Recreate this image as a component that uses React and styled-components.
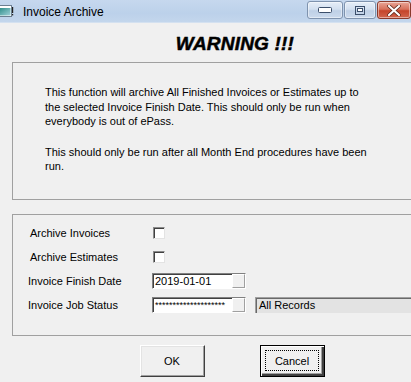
import React from "react";
import styled, { createGlobalStyle, css } from "styled-components";

const GlobalStyle = createGlobalStyle`
  html, body {
    margin: 0;
    padding: 0;
    background: #f0f0f0;
    overflow: hidden;
  }
  body {
    font-family: "Liberation Sans", Arial, sans-serif;
    font-size: 11px;
    color: #000;
  }
`;

const Window = styled.div`
  width: 411px;
  height: 382px;
  overflow: hidden;
  background: #f0f0f0;
`;

const TitleBar = styled.div`
  height: 22px;
  display: flex;
  align-items: center;
  background: linear-gradient(#c6d8ee, #bcd1ea 60%, #c3d6ec);
  border-bottom: 1px solid #d4e1f0;
`;

const AppIcon = styled.svg`
  flex: none;
  margin-left: -2px;
  margin-right: 9px;
`;

const Caption = styled.span`
  flex: 1;
  font-size: 12px;
  color: #000;
  padding-top: 1px;
`;

const CaptionButtons = styled.div`
  display: flex;
  align-self: flex-start;
  gap: 1px;
  padding-top: 1px;
`;

const CaptionButton = styled.div`
  height: 18px;
  width: ${(p) => p.$w}px;
  border-radius: 3px;
  border: 1px solid ${(p) => (p.$close ? "#8a3a2c" : "#7f93ae")};
  box-sizing: border-box;
  display: flex;
  align-items: center;
  justify-content: center;
  background: ${(p) =>
    p.$close
      ? "linear-gradient(#e9a697, #d7715c 45%, #c5452b 55%, #d1654d)"
      : "linear-gradient(#e6eef8, #d3e0f0 45%, #bfd0e6 55%, #cbdaed)"};
  box-shadow: inset 0 0 0 1px rgba(255, 255, 255, 0.45);
`;

const Content = styled.div`
  width: 470px;
  padding-left: 12px;
  box-sizing: border-box;
`;

const Warning = styled.div`
  height: 39px;
  display: flex;
  align-items: center;
  justify-content: center;
  font-family: "Liberation Sans", Arial, sans-serif;
  font-weight: bold;
  font-style: italic;
  font-size: 19px;
  letter-spacing: 0.2px;
  -webkit-text-stroke: 0.5px #000;
  padding: 2px 12px 0 0;
  box-sizing: border-box;
`;

const Panel = styled.div`
  width: 470px;
  border: 1px solid #a0a0a0;
  box-sizing: border-box;
  ${(p) => css`
    height: ${p.$h}px;
    margin-top: ${p.$top}px;
  `}
`;

const InfoText = styled.div`
  padding: 22px 0 0 32px;
  line-height: 14.5px;

  p {
    margin: 0 0 16px;
  }
`;

const Form = styled.div`
  padding-top: 5px;
  display: flex;
  flex-direction: column;
`;

const Row = styled.div`
  height: ${(p) => p.$h}px;
  display: flex;
  align-items: center;
`;

const Label = styled.span`
  width: ${(p) => 139 - p.$indent}px;
  padding-left: ${(p) => p.$indent}px;
`;

const Checkbox = styled.span`
  width: 12px;
  height: 12px;
  box-sizing: border-box;
  background: #fff;
  border-top: 1px solid #8a8a8a;
  border-left: 1px solid #8a8a8a;
  border-right: 1px solid #e3e3e3;
  border-bottom: 1px solid #e3e3e3;
  box-shadow: inset 1px 1px 0 #404040;
  margin-left: 1px;
`;

const Field = styled.div`
  display: flex;
  width: 94px;
  height: 16px;
  box-sizing: border-box;
  border-top: 1px solid #808080;
  border-left: 1px solid #808080;
  border-right: 1px solid #fff;
  border-bottom: 1px solid #fff;
  box-shadow: inset 1px 1px 0 #404040;
  background: #fff;
`;

const FieldText = styled.span`
  flex: 1;
  padding-left: 2px;
  line-height: 14px;
  font-size: ${(p) => (p.$small ? "9px" : "11px")};
  overflow: hidden;
  white-space: nowrap;
`;

const FieldButton = styled.span`
  width: 13px;
  height: 14px;
  box-sizing: border-box;
  background: #f0f0f0;
  border-top: 1px solid #fff;
  border-left: 1px solid #fff;
  border-right: 1px solid #a0a0a0;
  border-bottom: 1px solid #a0a0a0;
`;

const ReadOnly = styled.div`
  margin-left: 9px;
  flex: 1;
  height: 16px;
  box-sizing: border-box;
  background: #e3e3e3;
  border-top: 1px solid #a0a0a0;
  border-left: 1px solid #a0a0a0;
  box-shadow: inset 1px 1px 0 #696969;
  padding-left: 3px;
  line-height: 15px;
`;

const ButtonBar = styled.div`
  display: flex;
  justify-content: center;
  gap: 55px;
  padding: 9px 18px 0 0;
`;

const Button = styled.button`
  width: 65px;
  height: 32px;
  font-family: "Liberation Sans", Arial, sans-serif;
  font-size: 11px;
  color: #000;
  background: #f0f0f0;
  padding: 0;
  box-sizing: border-box;
  border: 1px solid;
  border-color: #fff #404040 #404040 #fff;
  box-shadow: inset -1px -1px 0 #a0a0a0, inset 1px 1px 0 #e3e3e3;
  position: relative;

  ${(p) =>
    p.$default &&
    css`
      border: 1px solid #000;
      box-shadow: inset 1px 1px 0 #fff, inset -2px -2px 0 #404040,
        inset -3px -3px 0 #a0a0a0;

      &::after {
        content: "";
        position: absolute;
        inset: 4px 5px 5px 4px;
        border: 1px dotted #000;
      }
    `}
`;

const IconMinimize = () => (
  <svg width="14" height="6" viewBox="0 0 14 6">
    <rect x="0.5" y="0.5" width="13" height="5" rx="1" fill="#fff" stroke="#3c4f6b" />
  </svg>
);

const IconMaximize = () => (
  <svg width="10" height="9" viewBox="0 0 10 9">
    <rect x="0.5" y="0.5" width="9" height="8" fill="none" stroke="#3c4f6b" />
    <rect x="2.5" y="2.5" width="5" height="3" fill="#fff" stroke="#3c4f6b" />
  </svg>
);

const IconClose = () => (
  <svg width="14" height="11" viewBox="0 0 14 11">
    <path
      d="M2 1 L12 10 M12 1 L2 10"
      stroke="#5a2418"
      strokeWidth="3.6"
      strokeLinecap="round"
    />
    <path d="M2 1 L12 10 M12 1 L2 10" stroke="#fff" strokeWidth="2.2" strokeLinecap="round" />
  </svg>
);

export default function App() {
  return (
    <>
      <GlobalStyle />
      <Window>
        <TitleBar>
          <AppIcon width="16" height="12" viewBox="0 0 16 12">
            <defs>
              <linearGradient id="ico" x1="0" y1="0" x2="1" y2="1">
                <stop offset="0" stopColor="#2f8f8a" />
                <stop offset="1" stopColor="#9fd0d8" />
              </linearGradient>
            </defs>
            <rect x="0.5" y="0.5" width="13" height="11" fill="#fff" stroke="#6d7f90" />
            <rect x="1.5" y="3" width="11" height="7.5" fill="url(#ico)" />
            <rect x="14" y="2" width="1.2" height="6" fill="#222" />
            <rect x="14" y="9" width="1.2" height="1.4" fill="#222" />
          </AppIcon>
          <Caption>Invoice Archive</Caption>
          <CaptionButtons>
            <CaptionButton $w={36}>
              <IconMinimize />
            </CaptionButton>
            <CaptionButton $w={32}>
              <IconMaximize />
            </CaptionButton>
            <CaptionButton $w={34} $close>
              <IconClose />
            </CaptionButton>
          </CaptionButtons>
        </TitleBar>
        <Content>
          <Warning>WARNING !!!</Warning>
          <Panel $h={138} $top={0}>
            <InfoText>
              <p>
                This function will archive All Finished Invoices or Estimates up to
                <br />
                the selected Invoice Finish Date. This should only be run when
                <br />
                everybody is out of ePass.
              </p>
              <p>
                This should only be run after all Month End procedures have been
                <br />
                run.
              </p>
            </InfoText>
          </Panel>
          <Panel $h={122} $top={14}>
            <Form>
              <Row $h={25}>
                <Label $indent={17}>Archive Invoices</Label>
                <Checkbox />
              </Row>
              <Row $h={24}>
                <Label $indent={17}>Archive Estimates</Label>
                <Checkbox />
              </Row>
              <Row $h={23}>
                <Label $indent={15}>Invoice Finish Date</Label>
                <Field>
                  <FieldText>2019-01-01</FieldText>
                  <FieldButton />
                </Field>
              </Row>
              <Row $h={25}>
                <Label $indent={15}>Invoice Job Status</Label>
                <Field>
                  <FieldText $small>********************</FieldText>
                  <FieldButton />
                </Field>
                <ReadOnly>All Records</ReadOnly>
              </Row>
            </Form>
          </Panel>
          <ButtonBar>
            <Button>OK</Button>
            <Button $default>Cancel</Button>
          </ButtonBar>
        </Content>
      </Window>
    </>
  );
}
